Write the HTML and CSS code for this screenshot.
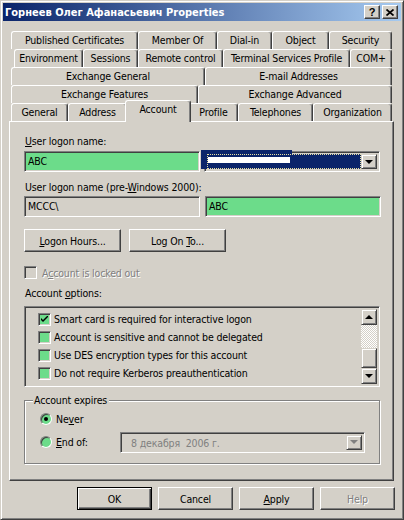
FILE: index.html
```html
<!DOCTYPE html>
<html lang="ru">
<head>
<meta charset="utf-8">
<title>Properties</title>
<link rel="stylesheet" href="styles.css">
</head>
<body>
<div class="dialog">
  <div class="titlebar">
    <span class="title">Горнеев Олег Афанасьевич Properties</span>
    <div class="caption-btns">
      <span class="cbtn help-q">?</span>
      <span class="cbtn">
        <svg width="8" height="7" viewBox="0 0 8 7"><path d="M0.5 0.5 L7.5 6.5 M7.5 0.5 L0.5 6.5" stroke="#000" stroke-width="1.7"/></svg>
      </span>
    </div>
  </div>

  <div class="tabs">
    <div class="tabrow r1">
      <div class="tab">Published Certificates</div>
      <div class="tab">Member Of</div>
      <div class="tab">Dial-in</div>
      <div class="tab">Object</div>
      <div class="tab">Security</div>
    </div>
    <div class="tabrow r2">
      <div class="tab">Environment</div>
      <div class="tab">Sessions</div>
      <div class="tab">Remote control</div>
      <div class="tab">Terminal Services Profile</div>
      <div class="tab">COM+</div>
    </div>
    <div class="tabrow r3">
      <div class="tab">Exchange General</div>
      <div class="tab">E-mail Addresses</div>
    </div>
    <div class="tabrow r4">
      <div class="tab">Exchange Features</div>
      <div class="tab">Exchange Advanced</div>
    </div>
    <div class="tabrow r5">
      <div class="tab">General</div>
      <div class="tab">Address</div>
      <div class="tab active">Account</div>
      <div class="tab">Profile</div>
      <div class="tab">Telephones</div>
      <div class="tab">Organization</div>
    </div>
  </div>

  <div class="panel">
    <div class="label lbl-first"><u>U</u>ser logon name:</div>
    <div class="fieldrow row-upn">
      <div class="edit green">ABC</div>
      <div class="combo focus">
        <div class="combo-value"><span class="hidden-bar"></span></div>
        <span class="dropbtn"><span class="arrow-down"></span></span>
      </div>
    </div>

    <div class="label lbl-second">User logon name (pre-<u>W</u>indows 2000):</div>
    <div class="fieldrow row-sam">
      <div class="edit readonly">MCCC\</div>
      <div class="edit green">ABC</div>
    </div>

    <div class="btnrow">
      <div class="button"><span><u>L</u>ogon Hours...</span></div>
      <div class="button"><span>Log On <u>T</u>o...</span></div>
    </div>

    <div class="lockrow">
      <span class="check disabled"></span>
      <span class="disabled-text">A<u>c</u>count is locked out</span>
    </div>

    <div class="label lbl-options">Account <u>o</u>ptions:</div>
    <div class="listbox">
      <div class="items">
        <div class="item"><span class="check green checked"><svg width="7" height="7" viewBox="0 0 7 7"><path d="M0 2 L0 4 L2 6 L7 1 L7 -1 L2 4 Z" fill="#000"/></svg></span><span>Smart card is required for interactive logon</span></div>
        <div class="item"><span class="check green"></span><span>Account is sensitive and cannot be delegated</span></div>
        <div class="item"><span class="check green"></span><span>Use DES encryption types for this account</span></div>
        <div class="item"><span class="check green"></span><span>Do not require Kerberos preauthentication</span></div>
      </div>
      <div class="scrollbar">
        <span class="sbtn"><span class="arrow-up"></span></span>
        <span class="track"></span>
        <span class="thumb"></span>
        <span class="sbtn"><span class="arrow-down"></span></span>
      </div>
    </div>

    <div class="group">
      <span class="legend">Account expires</span>
      <div class="radiorow">
        <span class="radio on"></span><span class="rtext">Ne<u>v</u>er</span>
      </div>
      <div class="radiorow">
        <span class="radio"></span><span class="rtext endof"><u>E</u>nd of:</span>
        <div class="datebox">
          <span class="datetext">8 декабря&nbsp; 2006 г.</span>
          <span class="dropbtn dim"><span class="arrow-down grey"></span></span>
        </div>
      </div>
    </div>
  </div>

  <div class="footer">
    <div class="button default">OK</div>
    <div class="button">Cancel</div>
    <div class="button"><span><u>A</u>pply</span></div>
    <div class="button"><span class="disabled-text">Help</span></div>
  </div>
</div>
</body>
</html>
```

FILE: styles.css
```css
html, body {
  margin: 0;
  padding: 0;
  background: #d4d0c8;
}

body {
  font-family: "DejaVu Sans Condensed", "Liberation Sans", Arial, sans-serif;
  font-size: 10.5px;
  letter-spacing: -0.15px;
  color: #000;
}

u {
  text-decoration: underline;
  text-underline-offset: 1px;
}

/* window frame */
.dialog {
  width: 404px;
  height: 520px;
  box-sizing: border-box;
  border: 1px solid;
  border-color: #d4d0c8 #404040 #404040 #d4d0c8;
  box-shadow: inset 1px 1px 0 #fff, inset -1px -1px 0 #808080;
  padding: 2px;
  display: flex;
  flex-direction: column;
  background: #d4d0c8;
}

.titlebar {
  height: 18px;
  background: linear-gradient(to right, #0a246a, #a6caf0);
  display: flex;
  align-items: center;
  justify-content: space-between;
  padding: 0 3px 0 2px;
}

.title {
  color: #fff;
  font-weight: bold;
  font-size: 11px;
  letter-spacing: 0;
  font-family: "DejaVu Sans Condensed", "Liberation Sans", Arial, sans-serif;
}

.caption-btns {
  display: flex;
  gap: 2px;
}

.cbtn {
  width: 16px;
  height: 14px;
  box-sizing: border-box;
  background: #d4d0c8;
  border: 1px solid;
  border-color: #fff #404040 #404040 #fff;
  box-shadow: inset -1px -1px 0 #808080;
  display: flex;
  align-items: center;
  justify-content: center;
}

.help-q {
  font-family: "Liberation Sans", Arial, sans-serif;
  font-weight: bold;
  font-size: 11px;
  line-height: 1;
}

/* tab strip */
.tabs {
  margin-top: 10px;
  padding-left: 8px;
  display: flex;
  flex-direction: column;
}

.tabrow {
  display: grid;
  height: 18px;
  width: 381px;
}

.r1 { grid-template-columns: 127px 79px 55px 57px 63px; }
.r2 { grid-template-columns: 69px 55px 85px 127px 42px; margin-left: 3px; width: 378px; }
.r3 { grid-template-columns: 194px 187px; }
.r4 { grid-template-columns: 187px 194px; }
.r5 { grid-template-columns: 57px 59px 62px 49px 75px 79px; position: relative; z-index: 2; }

.tab {
  box-sizing: border-box;
  height: 18px;
  border-top: 1px solid #fff;
  border-left: 1px solid #fff;
  border-right: 1px solid #404040;
  border-radius: 3px 3px 0 0;
  box-shadow: inset -1px 0 0 #808080;
  display: flex;
  align-items: center;
  justify-content: center;
  padding-bottom: 1px;
  white-space: nowrap;
  background: #d4d0c8;
}

.tab.active {
  margin: -3px -2px 0 -2px;
  height: 22px;
  padding-bottom: 5px;
  position: relative;
  z-index: 3;
}

/* page area */
.panel {
  margin-left: 6px;
  width: 385px;
  height: 360px;
  box-sizing: border-box;
  border: 1px solid;
  border-color: #fff #404040 #404040 #fff;
  box-shadow: inset -1px -1px 0 #808080;
  padding: 0 13px 0 14px;
  display: flex;
  flex-direction: column;
  position: relative;
  z-index: 1;
}

.label {
  height: 13px;
  line-height: 13px;
  padding-left: 1px;
}

.lbl-first { margin-top: 13px; }
.lbl-second { margin-top: 9px; }
.lbl-options { margin-top: 8px; }

.fieldrow {
  display: grid;
  height: 21px;
}

.row-upn {
  margin-top: 3px;
  grid-template-columns: 176px 176px;
  column-gap: 4px;
}

.row-sam {
  margin-top: 2px;
  grid-template-columns: 176px 176px;
  column-gap: 5px;
}

.edit {
  box-sizing: border-box;
  height: 21px;
  border: 1px solid;
  border-color: #808080 #fff #fff #808080;
  box-shadow: inset 1px 1px 0 #404040, inset -1px -1px 0 #d4d0c8;
  padding: 0 3px;
  line-height: 19px;
  white-space: nowrap;
}

.edit.green { background: #6cdc8a; }
.edit.readonly { background: #d4d0c8; }

.combo {
  box-sizing: border-box;
  height: 21px;
  border: 1px solid;
  border-color: #808080 #fff #fff #808080;
  box-shadow: inset 1px 1px 0 #404040, inset -1px -1px 0 #d4d0c8;
  padding: 2px;
  display: flex;
  position: relative;
}

/* selected item overlaps the frame at the top-left */
.combo.focus::before {
  content: "";
  position: absolute;
  left: -4px;
  top: -2px;
  width: 91px;
  height: 19px;
  background: #0a246a;
}

.combo-value {
  flex: 1;
  background: #0a246a;
  outline: 1px dotted #e8e0a0;
  outline-offset: -1px;
  position: relative;
}

.hidden-bar {
  position: absolute;
  left: 1px;
  top: 3px;
  width: 82px;
  height: 6px;
  background: #fff;
}

.dropbtn {
  width: 16px;
  box-sizing: border-box;
  background: #d4d0c8;
  border: 1px solid;
  border-color: #d4d0c8 #404040 #404040 #d4d0c8;
  box-shadow: inset 1px 1px 0 #fff, inset -1px -1px 0 #808080;
  display: flex;
  align-items: center;
  justify-content: center;
}

.arrow-down {
  width: 0;
  height: 0;
  border-left: 4px solid transparent;
  border-right: 4px solid transparent;
  border-top: 4px solid #000;
}

.arrow-up {
  width: 0;
  height: 0;
  border-left: 4px solid transparent;
  border-right: 4px solid transparent;
  border-bottom: 4px solid #000;
}

.arrow-down.grey { border-top-color: #808080; }

/* push buttons */
.btnrow {
  margin-top: 12px;
  display: flex;
  gap: 8px;
}

.button {
  box-sizing: border-box;
  width: 97px;
  height: 23px;
  border: 1px solid;
  border-color: #fff #404040 #404040 #fff;
  box-shadow: inset -1px -1px 0 #808080;
  display: flex;
  align-items: center;
  justify-content: center;
  white-space: nowrap;
}

/* check boxes */
.lockrow {
  margin-top: 14px;
  height: 13px;
  display: flex;
  align-items: center;
  gap: 5px;
}

.check {
  width: 13px;
  height: 13px;
  box-sizing: border-box;
  border: 1px solid;
  border-color: #808080 #fff #fff #808080;
  box-shadow: inset 1px 1px 0 #404040, inset -1px -1px 0 #d4d0c8;
  display: inline-flex;
  align-items: center;
  justify-content: center;
  flex: none;
}

.check.disabled {
  background: #d4d0c8;
}

.check.green { background: #6cdc8a; }

.disabled-text {
  color: #808080;
  text-shadow: 1px 1px 0 #fff;
}

/* list of options */
.listbox {
  margin-top: 6px;
  height: 81px;
  box-sizing: border-box;
  width: 356px;
  border: 1px solid;
  border-color: #808080 #fff #fff #808080;
  box-shadow: inset 1px 1px 0 #404040, inset -1px -1px 0 #d4d0c8;
  padding: 2px;
  display: flex;
}

.items {
  flex: 1;
  padding: 1px 0 0 11px;
}

.item {
  height: 18px;
  display: flex;
  align-items: center;
  gap: 3px;
  white-space: nowrap;
}

.scrollbar {
  width: 16px;
  display: flex;
  flex-direction: column;
}

.sbtn {
  height: 16px;
  box-sizing: border-box;
  background: #d4d0c8;
  border: 1px solid;
  border-color: #d4d0c8 #404040 #404040 #d4d0c8;
  box-shadow: inset 1px 1px 0 #fff, inset -1px -1px 0 #808080;
  display: flex;
  align-items: center;
  justify-content: center;
}

.track {
  flex: 1;
  background-color: #d4d0c8;
  background-image: repeating-conic-gradient(#fff 0 25%, #d4d0c8 0 50%);
  background-size: 2px 2px;
}

.thumb {
  height: 20px;
  box-sizing: border-box;
  border: 1px solid;
  border-color: #d4d0c8 #404040 #404040 #d4d0c8;
  box-shadow: inset 1px 1px 0 #fff, inset -1px -1px 0 #808080;
}

/* expiry group */
.group {
  margin-top: 13px;
  width: 356px;
  height: 64px;
  box-sizing: border-box;
  border: 1px solid #808080;
  box-shadow: 1px 1px 0 #fff, inset 1px 1px 0 #fff;
  padding: 0 0 0 15px;
  display: flex;
  flex-direction: column;
}

.legend {
  margin: -7px 0 0 -7px;
  align-self: flex-start;
  padding: 0 2px 0 1px;
  background: #d4d0c8;
  height: 13px;
  line-height: 13px;
}

.radiorow {
  display: flex;
  align-items: center;
  height: 20px;
}

.radiorow + .radiorow {
  margin-top: 3px;
}

.radiorow:first-of-type {
  margin-top: 2px;
}

.radio {
  width: 12px;
  height: 12px;
  box-sizing: border-box;
  border-radius: 50%;
  border: 1px solid;
  border-color: #808080 #fff #fff #808080;
  box-shadow: inset 1px 1px 0 #404040;
  background: #6cdc8a;
  display: inline-flex;
  align-items: center;
  justify-content: center;
  flex: none;
}

.radio.on::after {
  content: "";
  width: 4px;
  height: 4px;
  border-radius: 50%;
  background: #000;
}

.rtext {
  margin-left: 4px;
}

.endof {
  width: 64px;
}

.datebox {
  box-sizing: border-box;
  width: 245px;
  height: 21px;
  border: 1px solid;
  border-color: #808080 #fff #fff #808080;
  box-shadow: inset 1px 1px 0 #404040, inset -1px -1px 0 #d4d0c8;
  padding: 2px;
  display: flex;
  align-items: stretch;
}

.datetext {
  flex: 1;
  color: #808080;
  padding-left: 8px;
  line-height: 17px;
}

/* dialog buttons */
.footer {
  margin-top: 6px;
  display: flex;
  justify-content: flex-end;
  gap: 6px;
  padding-right: 6px;
}

.footer .button {
  width: 75px;
}

.button.default {
  border: 1px solid #000;
  box-shadow: inset 1px 1px 0 #fff, inset -1px -1px 0 #404040, inset -2px -2px 0 #808080;
}
```
